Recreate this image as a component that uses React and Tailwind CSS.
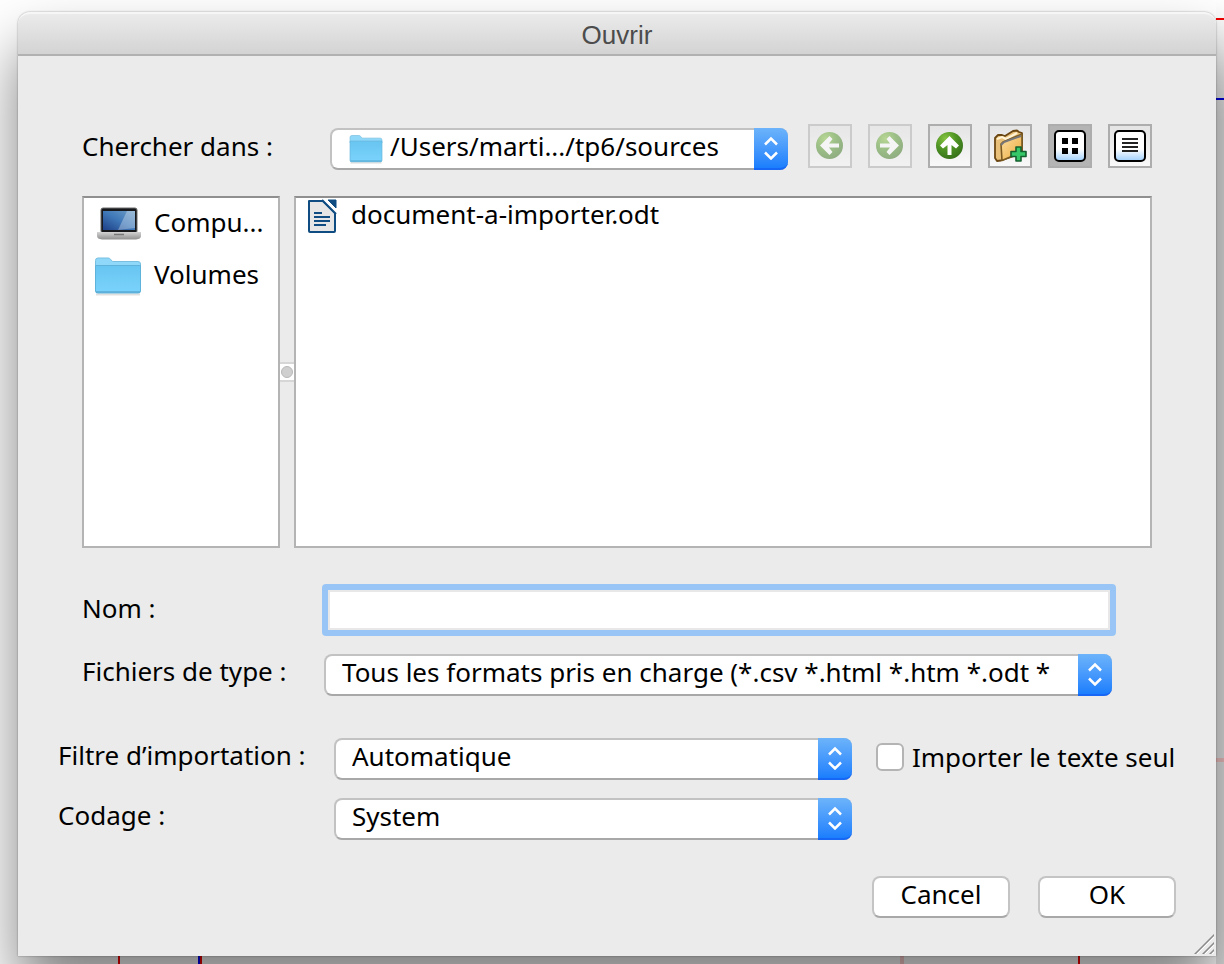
import { useState } from 'react';

function FolderIcon({ className = '' }) {
  return (
    <svg viewBox="0 0 48 40" preserveAspectRatio="none" className={className} aria-hidden="true">
      <defs>
        <linearGradient id="folder-front" x1="0" y1="0" x2="0" y2="1">
          <stop offset="0" stopColor="#68c5f1" />
          <stop offset="1" stopColor="#7ad3fb" />
        </linearGradient>
      </defs>
      <path d="M2 38.5h44" stroke="#000" strokeOpacity="0.12" strokeWidth="2" />
      <path
        d="M1.5 4.5Q1.5 2 4 2h10q1.500 0 2.500 1.200L18.500 5.500H44Q46.500 5.500 46.500 8V12H1.500Z"
        fill="#8fd8fa"
        stroke="#79bfe0"
      />
      <path d="M1.500 9.500H46.500V35Q46.500 37 44.500 37H3.500Q1.500 37 1.500 35Z" fill="url(#folder-front)" stroke="#5fb3db" />
      <path d="M2 36h44" stroke="#58aad3" strokeWidth="1.500" />
    </svg>
  );
}

function LaptopIcon({ className = '' }) {
  return (
    <svg viewBox="0 0 46 34" className={className} aria-hidden="true">
      <defs>
        <linearGradient id="laptop-screen" x1="0" y1="1" x2="1" y2="0">
          <stop offset="0" stopColor="#1d3f86" />
          <stop offset="0.5" stopColor="#3f78b8" />
          <stop offset="1" stopColor="#6f9fc8" />
        </linearGradient>
        <linearGradient id="laptop-base" x1="0" y1="0" x2="0" y2="1">
          <stop offset="0" stopColor="#d4d4d4" />
          <stop offset="1" stopColor="#8f8f8f" />
        </linearGradient>
      </defs>
      <rect x="5" y="1" width="36" height="25" rx="2" fill="#16181c" stroke="#6d6d6d" />
      <rect x="7" y="4" width="32" height="19" fill="url(#laptop-screen)" />
      <path d="M31 4h8v17L22 23Z" fill="#fff" fillOpacity="0.3" />
      <path d="M1 25h44v4q0 3-5 3.500H6Q1 32 1 29Z" fill="url(#laptop-base)" />
      <path d="M18 27.500h10" stroke="#777" strokeWidth="1.500" />
    </svg>
  );
}

function DocumentIcon({ className = '' }) {
  return (
    <svg viewBox="0 0 30 34" className={className} aria-hidden="true">
      <path d="M2 2h14l12 12v18q0 1-1 1H3q-1 0-1-1Z" fill="#e6e6e6" stroke="#0f4c81" strokeWidth="2" strokeLinejoin="round" />
      <path d="M15 0h5l10 10v6Z" fill="#fff" />
      <path d="M15 1 29 15" stroke="#0f4c81" strokeWidth="2" />
      <path d="M21 1h8v8Z" fill="#0f4c81" stroke="#0f4c81" />
      <path d="M7 14h8M7 18h16M7 22h16M7 26h12" stroke="#0f4c81" strokeWidth="2" />
    </svg>
  );
}

function ArrowIcon({ direction }) {
  const rotation = { up: 0, right: 90, left: -90 }[direction];
  return (
    <svg viewBox="0 0 28 30" className="h-[30px] w-7" aria-hidden="true">
      <defs>
        <radialGradient id="arrow-ball" cx="0.35" cy="0.25" r="0.8">
          <stop offset="0" stopColor="#86c440" />
          <stop offset="0.5" stopColor="#4e9324" />
          <stop offset="1" stopColor="#37701a" />
        </radialGradient>
      </defs>
      <circle cx="13.500" cy="14.500" r="13.500" fill="url(#arrow-ball)" />
      <path
        d="M13.500 5 23 14.500 20 17.500 15.500 14V24H11.500V14L7 17.500 4 14.500Z"
        fill="#fff"
        transform={`rotate(${rotation} 13.5 14.5)`}
      />
    </svg>
  );
}

function NewFolderIcon() {
  return (
    <svg viewBox="0 0 34 34" className="size-[34px]" aria-hidden="true">
      <defs>
        <linearGradient id="new-folder" x1="0" y1="0" x2="1" y2="1">
          <stop offset="0" stopColor="#fbe0a4" />
          <stop offset="1" stopColor="#eda93c" />
        </linearGradient>
      </defs>
      <path
        d="M2 9 5 6 9 6 12 7 20 2 24 1.500 26 3 29 4V24L8 31.500 4 32 2 29Z"
        fill="#e9c079"
        stroke="#6b4713"
        strokeWidth="1.800"
        strokeLinejoin="round"
      />
      <path d="M4 10 9 8 13 10 24 4" fill="none" stroke="#fff3d6" strokeWidth="2" />
      <path d="M8 15 10 13 29 5V23L9 31.500Z" fill="url(#new-folder)" stroke="#7a5a22" strokeWidth="1.600" strokeLinejoin="round" />
      <path d="M8 16 11 13 28 7" fill="none" stroke="#77777a" strokeWidth="2" />
      <path
        d="M23 18h5v4.500h5v5h-5V32h-5v-4.500h-5v-5h5Z"
        fill="#35c768"
        stroke="#14602f"
        strokeWidth="1.600"
        strokeLinejoin="round"
      />
    </svg>
  );
}

function ViewIcon({ mode }) {
  return (
    <svg viewBox="0 0 32 32" className="size-8" aria-hidden="true">
      <defs>
        <linearGradient id="view-face" x1="0" y1="0" x2="0" y2="1">
          <stop offset="0.6" stopColor="#fff" />
          <stop offset="1" stopColor="#9fd0ff" />
        </linearGradient>
      </defs>
      <rect x="1" y="1" width="30" height="30" rx="4" fill="url(#view-face)" stroke="#000" strokeWidth="2" />
      {mode === 'icons' ? (
        <path d="M8 8h6v6H8ZM18 8h6v6h-6ZM8 18h6v6H8ZM18 18h6v6h-6Z" fill="#000" />
      ) : (
        <path d="M8 9h16M8 13h16M8 17h16M8 21h16" stroke="#222" strokeWidth="2" />
      )}
    </svg>
  );
}

function ToolButton({ label, disabled, pressed, onClick, children }) {
  return (
    <button
      type="button"
      aria-label={label}
      aria-pressed={pressed}
      disabled={disabled}
      onClick={onClick}
      className={`flex size-11 shrink-0 items-center justify-center border-2 border-[#adadad] disabled:opacity-50 ${
        pressed ? 'bg-[#b4b4b4]' : 'bg-linear-to-b from-[#e4e4e4] to-[#f8f8f8]'
      }`}
    >
      {children}
    </button>
  );
}

function Select({ id, options, icon, className = '' }) {
  return (
    <div className={`relative min-w-0 ${className}`}>
      <select
        id={id}
        className={`block h-[42px] w-full appearance-none overflow-hidden rounded-lg border-2 border-[#c2c2c2] border-b-[#a8a8a8] bg-white pr-10 pb-1.5 whitespace-nowrap text-black ${
          icon ? 'pl-[58px]' : 'pl-4'
        }`}
      >
        {options.map((option) => (
          <option key={option}>{option}</option>
        ))}
      </select>
      {icon && <span className="pointer-events-none absolute top-1.5 left-[19px]">{icon}</span>}
      <span className="pointer-events-none absolute inset-y-0 right-0 flex w-[34px] items-center justify-center rounded-r-lg border-b-2 border-[#1667f5] bg-linear-to-b from-[#6cb3fa] to-[#1a7efd]">
        <svg viewBox="0 0 16 24" className="h-6 w-4" fill="none" stroke="#fff" strokeWidth="2.500" aria-hidden="true">
          <path d="M2 8.500 8 2.500 14 8.500M2 16.500 8 22.500 14 16.500" />
        </svg>
      </span>
    </div>
  );
}

function PushButton({ children }) {
  return (
    <button
      type="button"
      className="h-[42px] w-[138px] rounded-lg border-2 border-[#c4c4c4] border-b-[#a8a8a8] bg-white pb-1.5"
    >
      {children}
    </button>
  );
}

// Page behind the dialog, with the guide lines that stick out around it
function Backdrop() {
  return (
    <div aria-hidden="true">
      <div className="absolute top-0 right-0 bottom-0 w-2 bg-linear-to-b from-white to-[#e2e2e2] to-[120px]" />
      <div className="absolute top-[18px] right-0 h-0.5 w-2 bg-[#f00000]" />
      <div className="absolute top-[98px] right-0 h-0.5 w-2 bg-[#0000e0]" />
      <div className="absolute top-[758px] right-0 h-1 w-2 bg-[#f0c0c0]" />
      <div className="absolute bottom-0 left-[118px] h-2 w-0.5 bg-[#ff0000]" />
      <div className="absolute bottom-0 left-[198px] h-2 w-1 border-r-2 border-[#f00000] bg-[#0000ff]" />
      <div className="absolute bottom-0 left-[900px] h-2 w-1 bg-[#ffd0d0]" />
      <div className="absolute right-[144px] bottom-0 h-2 w-0.5 bg-[#ff0000]" />
    </div>
  );
}

export default function App() {
  const [view, setView] = useState('icons');
  const [name, setName] = useState('');
  const [textOnly, setTextOnly] = useState(false);

  return (
    <div className="relative min-h-screen overflow-hidden bg-white pt-3 pr-2 pb-2 pl-[18px] font-['Noto_Sans','Lucida_Grande',sans-serif] text-[26px] leading-8 text-black">
      <Backdrop />
      <div
        role="dialog"
        aria-labelledby="dialog-title"
        className="relative rounded-t-xl bg-[#ebebeb] shadow-[0_0_2px_rgba(0,0,0,0.4),0_36px_60px_rgba(0,0,0,0.5)]"
      >
        <header className="flex h-11 items-center justify-center rounded-t-xl border-t-2 border-b-2 border-t-[#f6f6f6] border-b-[#b1b1b1] bg-linear-to-b from-[#ebebeb] to-[#d3d3d3]">
          <h1 id="dialog-title" className="pt-0.5 font-['Liberation_Sans',sans-serif] text-[#4c4c4c]">Ouvrir</h1>
        </header>

        <div className="flex items-start px-16 pt-[68px]">
          <label htmlFor="look-in" className="w-[248px] shrink-0 pt-1.5">Chercher dans :</label>
          <Select
            id="look-in"
            className="mt-1 flex-1"
            options={['/Users/marti.../tp6/sources']}
            icon={<FolderIcon className="h-[30px] w-[34px]" />}
          />
          <div className="ml-5 flex gap-4">
            <ToolButton label="Précédent" disabled><ArrowIcon direction="left" /></ToolButton>
            <ToolButton label="Suivant" disabled><ArrowIcon direction="right" /></ToolButton>
            <ToolButton label="Dossier parent"><ArrowIcon direction="up" /></ToolButton>
            <ToolButton label="Nouveau dossier"><NewFolderIcon /></ToolButton>
            <ToolButton label="Icônes" pressed={view === 'icons'} onClick={() => setView('icons')}>
              <ViewIcon mode="icons" />
            </ToolButton>
            <ToolButton label="Liste" pressed={view === 'list'} onClick={() => setView('list')}>
              <ViewIcon mode="list" />
            </ToolButton>
          </div>
        </div>

        <div className="flex h-[378px] px-16 pt-[26px]">
          <ul className="w-[198px] shrink-0 border-2 border-[#b4b4b4] border-t-[#8f8f8f] bg-white">
            <li>
              <button type="button" className="flex h-[52px] w-full items-center gap-3 pl-3">
                <LaptopIcon className="h-[34px] w-[46px]" />
                <span className="pb-1">Compu...</span>
              </button>
            </li>
            <li>
              <button type="button" className="flex h-[52px] w-full items-center gap-3 pl-2.5">
                <FolderIcon className="h-10 w-12" />
                <span className="pb-1">Volumes</span>
              </button>
            </li>
          </ul>
          <div className="flex w-3.5 shrink-0 items-center">
            <div className="flex h-5 w-full items-center justify-center border-y-2 border-[#d6d6d6] bg-white">
              <span className="size-3 rounded-full border border-[#b8b8b8] bg-[#cfcfcf]" />
            </div>
          </div>
          <ul className="min-w-0 flex-1 border-2 border-[#b4b4b4] border-t-[#8f8f8f] bg-white">
            <li>
              <button type="button" className="flex h-9 items-center gap-3.5 pl-[11px]">
                <DocumentIcon className="h-[34px] w-[30px]" />
                <span className="pb-1">document-a-importer.odt</span>
              </button>
            </li>
          </ul>
        </div>

        <div className="flex items-center pt-9 pr-[100px] pl-16">
          <label htmlFor="file-name" className="w-60 shrink-0 pb-1">Nom :</label>
          <div className="min-w-0 flex-1 rounded-sm bg-[#98c5f5] p-1.5">
            <input
              id="file-name"
              type="text"
              value={name}
              onChange={(e) => setName(e.target.value)}
              className="block h-10 w-full border-2 border-[#e8e8e8] bg-white px-2 outline-none"
            />
          </div>
        </div>

        <div className="flex items-center pt-[18px] pr-[104px] pl-16">
          <label htmlFor="file-type" className="w-[242px] shrink-0 pb-2">Fichiers de type :</label>
          <Select
            id="file-type"
            className="flex-1"
            options={['Tous les formats pris en charge (*.csv *.html *.htm *.odt *']}
          />
        </div>

        <div className="grid grid-cols-[276px_1fr_332px] items-center gap-y-[18px] pt-[42px] pr-8 pl-10">
          <label htmlFor="import-filter" className="pb-2">Filtre d’importation :</label>
          <Select id="import-filter" options={['Automatique']} />
          <label className="ml-6 flex items-center gap-2 pb-1 whitespace-nowrap">
            <input
              type="checkbox"
              checked={textOnly}
              onChange={(e) => setTextOnly(e.target.checked)}
              className="size-7 shrink-0 appearance-none rounded-md border-2 border-[#b4b4b4] bg-white checked:bg-[#1a7efd]"
            />
            Importer le texte seul
          </label>
          <label htmlFor="encoding" className="pb-2">Codage :</label>
          <Select id="encoding" options={['System']} />
        </div>

        <div className="flex justify-end gap-7 pt-9 pr-10 pb-[38px]">
          <PushButton>Cancel</PushButton>
          <PushButton>OK</PushButton>
        </div>

        <svg viewBox="0 0 20 20" className="absolute right-0.5 bottom-0.5 size-5" fill="none" aria-hidden="true">
          <path d="M0 21 21 0M8 21 21 8M15 21 21 15" stroke="#8a8a8a" strokeWidth="1.500" />
          <path d="M2 21 21 2M10 21 21 10M17 21 21 17" stroke="#fff" />
        </svg>
      </div>
    </div>
  );
}
